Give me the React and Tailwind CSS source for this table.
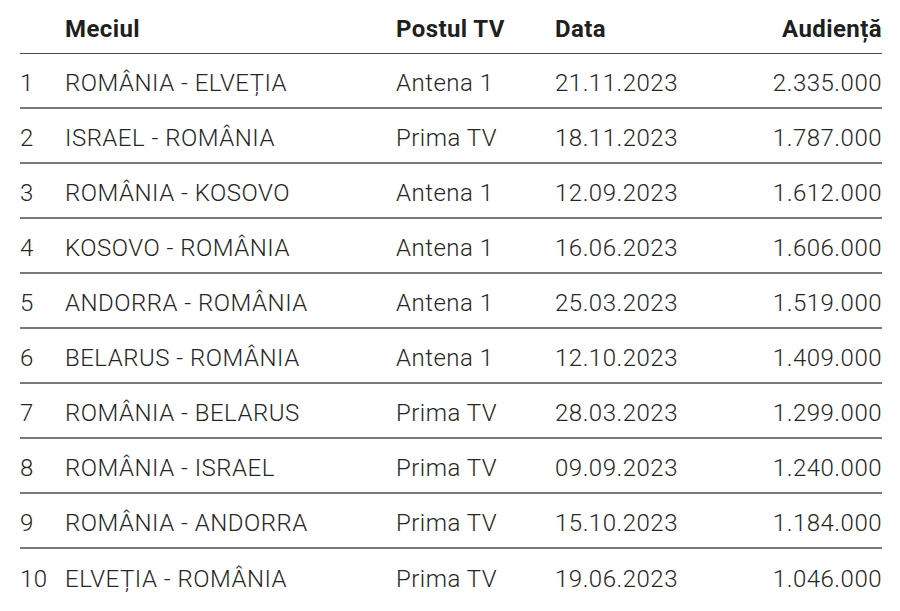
import React from "react";

const rows = [
  ["1", "ROMÂNIA - ELVEȚIA", "Antena 1", "21.11.2023", "2.335.000"],
  ["2", "ISRAEL - ROMÂNIA", "Prima TV", "18.11.2023", "1.787.000"],
  ["3", "ROMÂNIA - KOSOVO", "Antena 1", "12.09.2023", "1.612.000"],
  ["4", "KOSOVO - ROMÂNIA", "Antena 1", "16.06.2023", "1.606.000"],
  ["5", "ANDORRA - ROMÂNIA", "Antena 1", "25.03.2023", "1.519.000"],
  ["6", "BELARUS - ROMÂNIA", "Antena 1", "12.10.2023", "1.409.000"],
  ["7", "ROMÂNIA - BELARUS", "Prima TV", "28.03.2023", "1.299.000"],
  ["8", "ROMÂNIA - ISRAEL", "Prima TV", "09.09.2023", "1.240.000"],
  ["9", "ROMÂNIA - ANDORRA", "Prima TV", "15.10.2023", "1.184.000"],
  ["10", "ELVEȚIA - ROMÂNIA", "Prima TV", "19.06.2023", "1.046.000"],
];

const App = () => {
  return (
    <div className="w-[900px] h-[611px] bg-white pl-5 text-[#262626]" style={{ fontFamily: "Roboto, 'Liberation Sans', sans-serif" }}>
      <div className="w-[862px]">
        {/* header */}
        <div className="grid grid-cols-[45px_331px_159px_1fr_auto] items-center h-[54px] pt-1 border-b border-[#4a4a4a] text-[24px] font-bold tracking-[0.4px] text-[#1f1f1f]">
          <span></span>
          <span>Meciul</span>
          <span>Postul TV</span>
          <span>Data</span>
          <span className="text-right">Audiență</span>
        </div>

        {rows.map((r, i) => (
          <div
            key={r[0]}
            className={
              "grid grid-cols-[45px_331px_159px_1fr_auto] items-center h-[55px] pt-[5px] text-[24px] font-light tracking-[0.5px] " +
              (i < rows.length - 1 ? "border-b-2 border-[#7a7a7a]" : "")
            }
          >
            <span>{r[0]}</span>
            <span>{r[1]}</span>
            <span>{r[2]}</span>
            <span>{r[3]}</span>
            <span className="text-right">{r[4]}</span>
          </div>
        ))}
      </div>
    </div>
  );
};

export default App;
